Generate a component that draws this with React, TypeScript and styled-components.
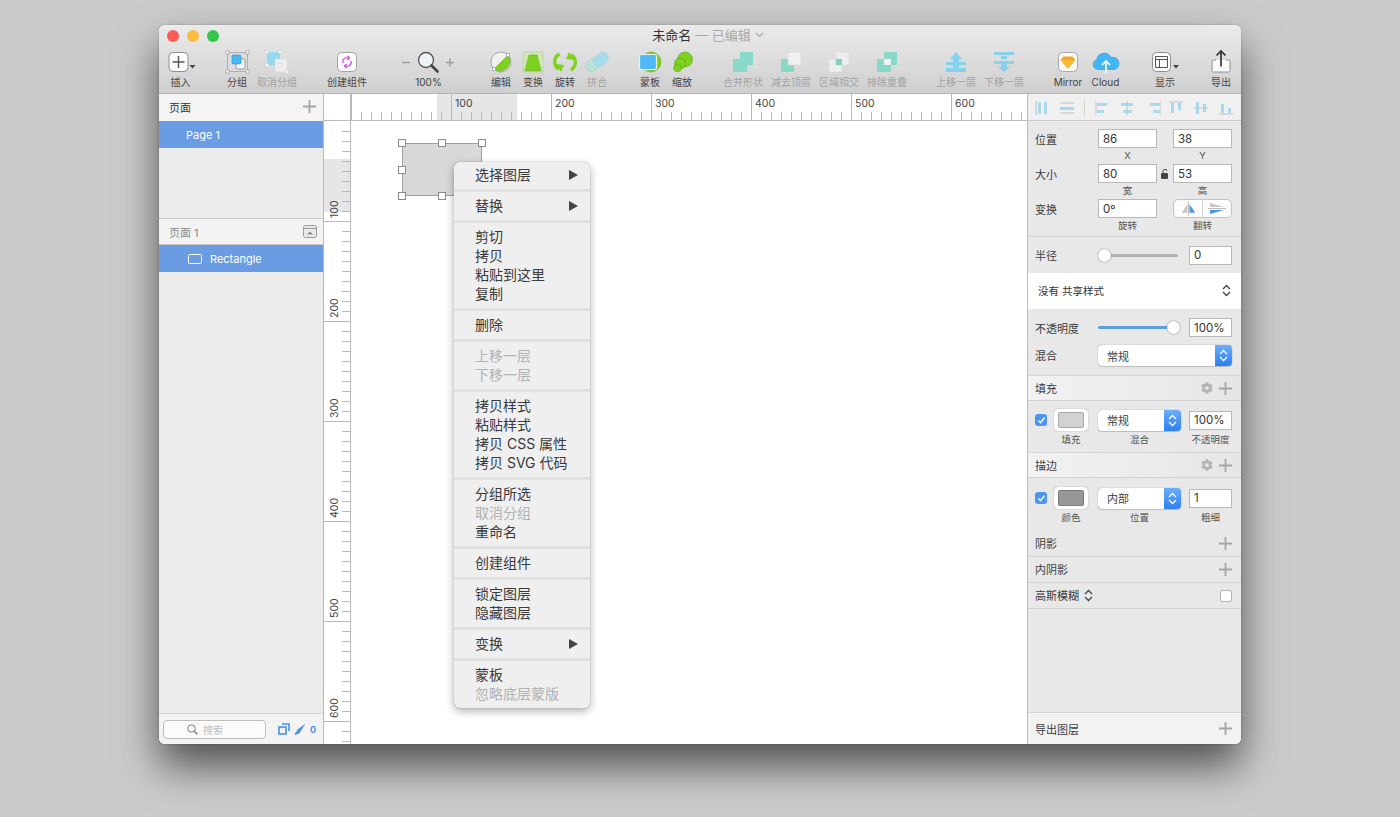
import * as React from "react";
import styled, { createGlobalStyle } from "styled-components";
import { FaCog } from "react-icons/fa";

const GlobalStyle = createGlobalStyle`
  html, body { margin: 0; padding: 0; height: 100%; background: #cbcbcb; }
  body { font-family: Inter, "Noto Sans CJK SC", sans-serif; overflow: hidden; }
  * { box-sizing: border-box; }
`;

const Desktop = styled.div`
  width: 1400px;
  height: 817px;
  padding: 25px 0 0 159px;
  background: #cbcbcb;
`;
const Window = styled.div`
  width: 1082px;
  height: 719px;
  display: flex;
  flex-direction: column;
  border-radius: 6px;
  overflow: hidden;
  background: #fff;
  box-shadow: 0 0 2px rgba(0, 0, 0, 0.3), 0 22px 42px rgba(0, 0, 0, 0.6);
`;
const TopBar = styled.div`
  height: 69px;
  flex: none;
  background: linear-gradient(#ebebeb, #d0cfd0);
  border-bottom: 1px solid #b4b4b4;
`;
const TitleRow = styled.div`
  height: 22px;
  display: grid;
  grid-template-columns: 1fr auto 1fr;
  align-items: center;
  padding: 0 8px;
`;
const Lights = styled.div`
  display: flex;
  gap: 8px;
`;
const Light = styled.span<{ $c: string }>`
  width: 12px;
  height: 12px;
  border-radius: 50%;
  background: ${(p) => p.$c};
`;
const Title = styled.div`
  font-size: 13px;
  line-height: 20px;
  margin: 0 0 2px 16px;
  color: #333;
  display: flex;
  align-items: center;
  gap: 4px;
  white-space: nowrap;
`;
const TitleSoft = styled.span`
  color: #a9a9a9;
`;
const Tools = styled.div`
  display: flex;
  gap: 21px;
  padding-left: 2px;
  margin-top: 2px;
`;
const ToolGroup = styled.div<{ $end?: boolean }>`
  display: flex;
  ${(p) => (p.$end ? "margin-left: -5px;" : "")}
`;
const Tool = styled.div<{ $w: number; $off?: boolean }>`
  width: ${(p) => p.$w}px;
  display: flex;
  flex-direction: column;
  align-items: center;
  font-size: 10px;
  line-height: 12px;
  white-space: nowrap;
  color: ${(p) => (p.$off ? "#a3a3a3" : "#444")};
  svg {
    display: block;
    height: 26px;
    margin-bottom: 1px;
  }
`;

const Body = styled.div`
  flex: 1;
  display: flex;
  min-height: 0;
`;
const LeftPanel = styled.div`
  width: 165px;
  flex: none;
  display: flex;
  flex-direction: column;
  background: #ececec;
  border-right: 1px solid #b9b9b9;
`;
const PagesHead = styled.div`
  height: 27px;
  flex: none;
  display: flex;
  align-items: center;
  justify-content: space-between;
  padding: 0 7px 2px 10px;
  font-size: 11px;
  color: #333;
  background: #f4f4f4;
`;
const PageRow = styled.div<{ $pad: number }>`
  height: 27px;
  flex: none;
  display: flex;
  align-items: center;
  gap: 8px;
  padding-left: ${(p) => p.$pad}px;
  background: #699ce3;
  color: #fff;
  font-size: 11px;
`;
const PagesGap = styled.div`
  height: 70px;
  flex: none;
`;
const LayersHead = styled.div`
  height: 27px;
  flex: none;
  display: flex;
  align-items: center;
  justify-content: space-between;
  padding: 0 6px 0 10px;
  font-size: 11px;
  color: #8a8a8a;
  background: #f3f3f3;
  border-top: 1px solid #c9c9c9;
  border-bottom: 1px solid #c4c4c4;
`;
const Grow = styled.div`
  flex: 1;
`;
const SearchBar = styled.div`
  height: 31px;
  flex: none;
  display: flex;
  align-items: center;
  padding: 0 0 0 4px;
  background: #f3f3f3;
  border-top: 1px solid #d5d5d5;
`;
const SearchBox = styled.div`
  width: 103px;
  height: 19px;
  display: flex;
  align-items: center;
  gap: 5px;
  padding-left: 23px;
  background: #fbfbfb;
  border: 1px solid #bdbdbd;
  border-radius: 4px;
  font-size: 10px;
  color: #bbb;
`;
const SearchTools = styled.div`
  display: flex;
  align-items: center;
  margin-left: 12px;
  gap: 4px;
  font-size: 9px;
  font-weight: 700;
  color: #4a90e2;
`;

const CanvasArea = styled.div`
  flex: 1;
  display: grid;
  grid-template-columns: 27px 1fr;
  grid-template-rows: 27px 1fr;
  min-width: 0;
  background: #fff;
`;
const Corner = styled.div`
  background: #fff;
  border-right: 1px solid #b9b9b9;
  border-bottom: 1px solid #b9b9b9;
`;
const RulerSvg = styled.svg`
  display: block;
  font-family: Inter, sans-serif;
  font-size: 10.5px;
  fill: #444;
`;
const Stage = styled.div`
  position: relative;
  overflow: hidden;
  background: #fff;
`;
const Shape = styled.div`
  position: absolute;
  left: 51px;
  top: 22px;
  width: 80px;
  height: 53px;
  background: #d8d7d9;
  box-shadow: inset 0 0 0 1px #9f9f9f;
`;
const Handle = styled.span<{ $x: string; $y: string }>`
  position: absolute;
  left: ${(p) => p.$x};
  top: ${(p) => p.$y};
  width: 8px;
  height: 8px;
  margin: -4px 0 0 -4px;
  background: #fff;
  border: 1px solid #8a8a8a;
`;
const Menu = styled.div`
  position: absolute;
  left: 103px;
  top: 41px;
  width: 136px;
  height: 546px;
  padding: 4px 0;
  background: #efefef;
  border-radius: 6px;
  box-shadow: 0 0 1px rgba(0, 0, 0, 0.35), 0 3px 9px rgba(0, 0, 0, 0.32);
`;
const MenuItem = styled.div<{ $off?: boolean }>`
  height: 19px;
  display: flex;
  align-items: center;
  justify-content: space-between;
  padding: 0 12px 4px 21px;
  font-size: 14px;
  white-space: nowrap;
  color: ${(p) => (p.$off ? "#b2b2b2" : "#3a3a3a")};
`;
const MenuArrow = styled.span`
  width: 0;
  height: 0;
  margin-top: 2px;
  border-left: 9px solid #444;
  border-top: 5px solid transparent;
  border-bottom: 5px solid transparent;
`;
const MenuSep = styled.div`
  height: 3px;
  margin: 4px 0 5px;
  background: #e1e1e1;
`;

const RightPanel = styled.div`
  width: 214px;
  flex: none;
  display: flex;
  flex-direction: column;
  background: #e8e8e8;
  border-left: 1px solid #bdbdbd;
  color: #3c3c3c;
  font-size: 11px;
`;
const AlignBar = styled.div`
  height: 27px;
  flex: none;
  display: flex;
  align-items: center;
  padding: 1px 0 0 7px;
  background: #f0f0f0;
  border-bottom: 1px solid #c9c9c9;
`;
const AlignIcon = styled.span<{ $w: number }>`
  width: ${(p) => p.$w}px;
  display: flex;
  justify-content: flex-start;
`;
const AlignSep = styled.span`
  width: 1px;
  height: 16px;
  margin-right: 10px;
  background: #d0d0d0;
`;
const Geometry = styled.div`
  height: 116px;
  flex: none;
  padding: 8px 9px 0 7px;
  border-bottom: 1px solid #d2d2d2;
  display: grid;
  grid-template-columns: 63px 59px 16px 59px;
  grid-auto-rows: 35px;
`;
const FieldCell = styled.div`
  display: flex;
  flex-direction: column;
  align-items: center;
`;
const RowLabel = styled.div`
  height: 19px;
  display: flex;
  align-items: center;
  white-space: nowrap;
`;
const Input = styled.div<{ $w?: number; $h?: number }>`
  width: ${(p) => (p.$w ? `${p.$w}px` : "100%")};
  height: ${(p) => p.$h ?? 19}px;
  flex: none;
  display: flex;
  align-items: center;
  padding-left: 4px;
  background: #fff;
  border: 1px solid #b8b8b8;
  font-size: 11.5px;
  color: #333;
`;
const Sub = styled.div`
  font-size: 9.5px;
  line-height: 16px;
  color: #555;
  white-space: nowrap;
`;
const LockCell = styled.div`
  height: 19px;
  display: flex;
  align-items: center;
  justify-content: center;
`;
const Flip = styled.div`
  width: 100%;
  height: 19px;
  display: flex;
  background: #fcfcfc;
  border: 1px solid #c4c4c4;
  border-radius: 5px;
  svg:first-child {
    border-right: 1px solid #d5d5d5;
  }
`;
const SliderRow = styled.div<{ $h: number }>`
  height: ${(p) => p.$h}px;
  flex: none;
  display: grid;
  grid-template-columns: 63px 82px 1fr;
  align-items: center;
  padding: 0 9px 0 7px;
`;
const Track = styled.div<{ $fill: number }>`
  position: relative;
  height: 3px;
  width: 80px;
  border-radius: 2px;
  background: ${(p) => (p.$fill ? "#5a9fe6" : "#b3b3b3")};
`;
const Thumb = styled.span<{ $fill: number }>`
  position: absolute;
  top: -5px;
  left: ${(p) => (p.$fill ? "69px" : "0")};
  width: 13px;
  height: 13px;
  border-radius: 50%;
  background: #fff;
  box-shadow: 0 0 1.5px rgba(0, 0, 0, 0.6);
`;
const SliderInput = styled(Input)`
  margin-left: 9px;
  width: 43px;
`;
const SharedStyle = styled.div`
  height: 36px;
  flex: none;
  display: flex;
  align-items: center;
  justify-content: space-between;
  padding: 0 10px 1px;
  background: #fff;
  font-size: 10.5px;
  color: #333;
`;
const BlendRow = styled.div`
  height: 30px;
  margin-top: -1px;
  flex: none;
  display: grid;
  grid-template-columns: 63px 1fr;
  align-items: start;
  padding: 0 9px 0 7px;
`;
const SelectBox = styled.div<{ $w?: number }>`
  width: ${(p) => (p.$w ? `${p.$w}px` : "100%")};
  height: 21px;
  display: flex;
  align-items: center;
  justify-content: space-between;
  padding-left: 9px;
  background: #fff;
  border-radius: 4px;
  box-shadow: 0 0 1px rgba(0, 0, 0, 0.55), 0 1px 1px rgba(0, 0, 0, 0.15);
  overflow: hidden;
  font-size: 11px;
`;
const Stepper = styled.span`
  width: 17px;
  height: 21px;
  display: flex;
  align-items: center;
  justify-content: center;
  background: linear-gradient(#69aef9, #2f7ff0);
`;
const SectionHead = styled.div<{ $plain?: boolean }>`
  height: 26px;
  flex: none;
  display: flex;
  align-items: center;
  gap: 6px;
  padding: 0 9px 0 7px;
  border-top: ${(p) => (p.$plain ? "none" : "1px solid #d6d6d6")};
  border-bottom: 1px solid #d2d2d2;
  background: ${(p) => (p.$plain ? "#e8e8e8" : "linear-gradient(90deg, #f2f2f2, #e6e6e6)")};
`;
const HeadName = styled.span`
  flex: 1;
  display: flex;
  align-items: center;
  gap: 5px;
  padding-bottom: 1px;
`;
const StyleRow = styled.div<{ $h: number; $pad: number }>`
  height: ${(p) => p.$h}px;
  flex: none;
  display: grid;
  grid-template-columns: 19px 44px 83px 8px 43px;
  padding: ${(p) => p.$pad}px 0 0 7px;
  align-items: start;
`;
const StyleCell = styled.div<{ $w?: number }>`
  width: ${(p) => (p.$w ? `${p.$w}px` : "auto")};
  display: flex;
  flex-direction: column;
  align-items: center;
`;
const Slot = styled.div`
  width: 100%;
  height: 22px;
  display: flex;
  align-items: center;
  margin-bottom: 1px;
`;
const Check = styled.span`
  width: 12px;
  height: 12px;
  margin-top: 5px;
  display: flex;
  align-items: center;
  justify-content: center;
  border-radius: 3px;
  background: #4a96f2;
`;
const SwatchFrame = styled.span`
  width: 34px;
  height: 22px;
  display: flex;
  padding: 3px 4px;
  background: #fff;
  border-radius: 4px;
  box-shadow: 0 0 1px rgba(0, 0, 0, 0.6);
`;
const SwatchFill = styled.span<{ $c: string }>`
  flex: 1;
  border-radius: 2px;
  border: 1px solid rgba(0, 0, 0, 0.2);
  background: ${(p) => p.$c};
`;
const BlurCheck = styled.span`
  width: 12px;
  height: 12px;
  background: #fff;
  border: 1px solid #b5b5b5;
  border-radius: 2px;
`;
const ExportBar = styled.div`
  height: 32px;
  flex: none;
  display: flex;
  align-items: center;
  justify-content: space-between;
  padding: 0 9px 0 7px;
  background: #f2f2f2;
  border-top: 1px solid #d6d6d6;
`;

const Plus = ({ s = 13 }: { s?: number }) => (
  <svg width={s} height={s} viewBox="0 0 13 13">
    <path d="M6.5 0v13M0 6.5h13" stroke="#a6a6a6" strokeWidth="1.8" />
  </svg>
);
const UpDown = ({ c = "#444" }: { c?: string }) => (
  <svg width="9" height="13" viewBox="0 0 9 13" fill="none" stroke={c} strokeWidth="1.3">
    <path d="M1 5l3.5-3.5L8 5M1 8l3.5 3.5L8 8" />
  </svg>
);

const Hnd = ({ x, y, pale }: { x: number; y: number; pale?: boolean }) => (
  <rect x={x - 1.5} y={y - 1.5} width="3" height="3" fill="#fff" stroke={pale ? "#c9c9c9" : "#8f8f8f"} strokeWidth=".6" />
);
const TOOL_ICONS: Record<string, React.ReactNode> = {
  insert: (
    <svg width="32" viewBox="0 0 32 26">
      <rect x="4" y="3.5" width="19" height="19" rx="4" fill="#fbfbfb" stroke="#8e8e8e" />
      <path d="M13.5 7v12M7.5 13h12" stroke="#555" strokeWidth="1.4" />
      <path d="M24.5 16h6l-3 3.5z" fill="#444" />
    </svg>
  ),
  group: (
    <svg width="32" viewBox="0 0 32 26">
      <rect x="6.5" y="3.5" width="20" height="19" fill="#dcdcdc" stroke="#9a9a9a" strokeWidth=".7" />
      <rect x="15" y="10" width="9" height="10" rx="1.5" fill="#f4f4f4" stroke="#777" strokeWidth=".7" />
      <rect x="11" y="6" width="9" height="9" rx="1.5" fill="#45b8f5" stroke="#2e8bc8" strokeWidth=".6" />
      <Hnd x={6.5} y={3.5} /><Hnd x={26.5} y={3.5} /><Hnd x={6.5} y={22.5} /><Hnd x={26.5} y={22.5} />
    </svg>
  ),
  ungroup: (
    <svg width="32" viewBox="0 0 32 26">
      <rect x="6" y="3" width="13" height="13" fill="#93d9ef" />
      <rect x="14" y="10" width="12" height="13" fill="#ededed" stroke="#d8d8d8" strokeWidth=".6" />
      <Hnd x={6} y={3} pale /><Hnd x={19} y={3} pale /><Hnd x={6} y={16} pale /><Hnd x={19} y={16} pale /><Hnd x={26} y={23} pale />
    </svg>
  ),
  component: (
    <svg width="32" viewBox="0 0 32 26">
      <rect x="6.5" y="3.5" width="19" height="19" rx="4" fill="#fbfbfb" stroke="#a3a3a3" />
      <g fill="none" stroke="#cf3fe0" strokeWidth="1.2">
        <path d="M12 14c-1-4 2-6 6-5M20 12c1 4-2 6-6 5" />
        <path d="M16.5 7l2 2-2 2M15.5 15l-2 2 2 2" />
      </g>
    </svg>
  ),
  zoom: (
    <svg width="71" viewBox="0 0 71 26">
      <path d="M9 13.5h8M53 13.5h8M57 9.5v8" stroke="#a0a0a0" strokeWidth="1.6" />
      <circle cx="33" cy="11" r="7.5" fill="#eef3f5" stroke="#555" strokeWidth="1.3" />
      <path d="M38.5 16.5L44.5 22.5" stroke="#444" strokeWidth="2.6" strokeLinecap="round" />
    </svg>
  ),
  edit: (
    <svg width="32" viewBox="0 0 32 26">
      <circle cx="16" cy="13" r="10" fill="#f2f2f2" stroke="#999" strokeWidth=".8" />
      <path d="M23 6a10 10 0 0 1-14 14z" fill="#7fd11f" stroke="#5fa80e" strokeWidth=".5" />
      <Hnd x={23} y={6} /><Hnd x={9} y={20} />
    </svg>
  ),
  transform: (
    <svg width="32" viewBox="0 0 32 26">
      <rect x="6" y="3" width="20" height="20" fill="#cfe7b4" stroke="#b5c9a0" strokeWidth=".6" />
      <path d="M12 6h8l4 16H8z" fill="#7fd11f" stroke="#62a812" strokeWidth=".5" />
    </svg>
  ),
  rotate: (
    <svg width="32" viewBox="0 0 32 26">
      <g fill="none" stroke="#7fd11f" strokeWidth="3.4">
        <path d="M10.5 5C4.5 8 4 17 10 20" />
        <path d="M22 21c5.5-3.5 6-12 0-15" />
      </g>
      <path d="M7 15l8 1-3 7z" fill="#7fd11f" />
      <path d="M25 11l-8-1 3-7z" fill="#7fd11f" />
    </svg>
  ),
  flatten: (
    <svg width="32" viewBox="0 0 32 26">
      <rect x="4" y="10" width="16" height="11" rx="5.5" transform="rotate(-40 12 15.5)" fill="#b7e4d6" stroke="#a0cdd6" strokeWidth=".5" />
      <rect x="12" y="5" width="16" height="11" rx="5.5" transform="rotate(-40 20 10.5)" fill="#a9dcec" stroke="#a0cdd6" strokeWidth=".5" />
    </svg>
  ),
  mask: (
    <svg width="32" viewBox="0 0 32 26">
      <circle cx="17" cy="13" r="10" fill="#7fd11f" stroke="#5fa80e" strokeWidth=".5" />
      <rect x="5.5" y="5.5" width="17" height="15" rx="2" fill="#50b9f5" stroke="#e9f3f7" strokeWidth="1.2" />
    </svg>
  ),
  scale: (
    <svg width="32" viewBox="0 0 32 26">
      <g fill="#7fd11f" stroke="#5c9f10" strokeWidth=".6">
        <circle cx="19" cy="10.5" r="7.5" />
        <circle cx="14" cy="14.5" r="5.5" />
        <circle cx="11.5" cy="19" r="3.8" />
      </g>
    </svg>
  ),
  union: (
    <svg width="48" viewBox="0 0 48 26">
      <path d="M21 3h13v13h-6v7H14V10h7z" fill="#88d9ca" />
    </svg>
  ),
  subtract: (
    <svg width="48" viewBox="0 0 48 26">
      <rect x="14" y="10" width="13" height="13" fill="#88d9ca" />
      <rect x="21" y="3" width="13" height="13" fill="#f1f1f1" stroke="#d8d8d8" strokeWidth=".6" />
    </svg>
  ),
  intersect: (
    <svg width="48" viewBox="0 0 48 26">
      <rect x="14" y="10" width="13" height="13" fill="#eeeeee" stroke="#d8d8d8" strokeWidth=".6" />
      <rect x="21" y="3" width="13" height="13" fill="#eeeeee" stroke="#d8d8d8" strokeWidth=".6" />
      <rect x="21" y="10" width="6" height="6" fill="#7ed3c3" />
    </svg>
  ),
  difference: (
    <svg width="48" viewBox="0 0 48 26">
      <rect x="14" y="10" width="14" height="13" fill="#88d9ca" />
      <rect x="21" y="3" width="13" height="13" fill="#88d9ca" />
      <rect x="21" y="10" width="7" height="6" fill="#f1f1f1" />
    </svg>
  ),
  forward: (
    <svg width="48" viewBox="0 0 48 26">
      <path d="M24 3l6 7h-3v3h7v3h-7v3h7v4H14v-4h7v-3h-7v-3h7v-3h-3z" fill="#86d2ee" />
    </svg>
  ),
  backward: (
    <svg width="48" viewBox="0 0 48 26">
      <path d="M14 3h20v3H14zM14 12h20v3h-7v3h3l-6 5-6-5h3v-3h-7zM21 7h6v3h-6z" fill="#86d2ee" />
    </svg>
  ),
  mirror: (
    <svg width="38" viewBox="0 0 38 26">
      <rect x="9.5" y="3.5" width="19" height="19" rx="4" fill="#fbfbfb" stroke="#a8a8a8" />
      <path d="M14.5 7.5h9l3 3.5-7.5 8.500L11.5 11z" fill="#f5a623" />
      <path d="M11.5 11h15l-7.5 8.500z" fill="#fdb93a" />
    </svg>
  ),
  cloud: (
    <svg width="38" viewBox="0 0 38 26">
      <path d="M11 20.5a5 5 0 0 1-1.2-9.8A7.5 7.5 0 0 1 24 8.500a6 6 0 0 1 3.500 12z" fill="#41b6f6" stroke="#2a8fd0" strokeWidth=".6" />
      <path d="M19 24V12M15 16l4-4 4 4" fill="none" stroke="#fff" strokeWidth="1.7" />
    </svg>
  ),
  display: (
    <svg width="40" viewBox="0 0 40 26">
      <rect x="7.5" y="3.5" width="18" height="19" rx="4" fill="#fbfbfb" stroke="#8e8e8e" />
      <path d="M10.5 7.5h12v11h-12zM10.5 10.5h12M14.5 10.5v8" fill="none" stroke="#555" />
      <path d="M28 16h6l-3 3.5z" fill="#444" />
    </svg>
  ),
  share: (
    <svg width="40" viewBox="0 0 40 26">
      <path d="M15 11h-2.5a1.500 1.500 0 0 0-1.500 1.500v9a1.500 1.500 0 0 0 1.500 1.500h15a1.500 1.500 0 0 0 1.500-1.500v-9a1.500 1.500 0 0 0-1.500-1.500H25" fill="#fbfbfb" stroke="#8e8e8e" />
      <path d="M20 17.500V2M15.500 6.500L20 2l4.500 4.500" fill="none" stroke="#333" strokeWidth="1.7" />
    </svg>
  ),
};

type ToolDef = { id: string; label: string; w: number; off?: boolean };
const TOOL_GROUPS: ToolDef[][] = [
  [{ id: "insert", label: "插入", w: 39 }],
  [
    { id: "group", label: "分组", w: 32 },
    { id: "ungroup", label: "取消分组", w: 48, off: true },
  ],
  [{ id: "component", label: "创建组件", w: 50 }],
  [{ id: "zoom", label: "100%", w: 71 }],
  [
    { id: "edit", label: "编辑", w: 32 },
    { id: "transform", label: "变换", w: 32 },
    { id: "rotate", label: "旋转", w: 32 },
    { id: "flatten", label: "拼合", w: 32, off: true },
  ],
  [
    { id: "mask", label: "蒙板", w: 32 },
    { id: "scale", label: "缩放", w: 32 },
  ],
  [
    { id: "union", label: "合并形状", w: 48, off: true },
    { id: "subtract", label: "减去顶层", w: 48, off: true },
    { id: "intersect", label: "区域相交", w: 48, off: true },
    { id: "difference", label: "排除重叠", w: 48, off: true },
  ],
  [
    { id: "forward", label: "上移一层", w: 48, off: true },
    { id: "backward", label: "下移一层", w: 48, off: true },
  ],
  [
    { id: "mirror", label: "Mirror", w: 38 },
    { id: "cloud", label: "Cloud", w: 37 },
  ],
  [{ id: "display", label: "显示", w: 40 }],
];

const ALIGN_ICONS: { w: number; d: string; line?: string }[] = [
  { w: 25, d: "M3 1h3v12H3zM9 1h3v12H9z", line: "M1 0v14" },
  { w: 24, d: "M0 6h15v3H0z", line: "M0 2h15M0 12h15" },
  { w: 25, d: "M2 2h10v3H2zM2 9h7v3H2z", line: "M1 0v14" },
  { w: 27, d: "M1 2h12v3H1zM3 9h9v3H3z", line: "M7 0v14" },
  { w: 22, d: "M3 2h10v3H3zM6 9h7v3H6z", line: "M14 0v14" },
  { w: 25, d: "M2 2h3v10H2zM9 2h3v7H9z", line: "M0 1h14" },
  { w: 25, d: "M2 1h3v12H2zM9 3h3v8H9z", line: "M0 7h14" },
  { w: 14, d: "M2 3h3v9H2zM9 7h3v5H9z", line: "M0 13h14" },
];

const AlignGlyph = ({ d, line }: { d: string; line?: string }) => (
  <svg width="14" height="14" viewBox="0 0 14 14">
    <path d={d} fill="#a7d9f3" />
    {line && <path d={line} stroke="#c2c2c2" />}
  </svg>
);

const MENU: (string | { t: string; off?: boolean; arrow?: boolean })[] = [
  { t: "选择图层", arrow: true }, "-",
  { t: "替换", arrow: true }, "-",
  { t: "剪切" }, { t: "拷贝" }, { t: "粘贴到这里" }, { t: "复制" }, "-",
  { t: "删除" }, "-",
  { t: "上移一层", off: true }, { t: "下移一层", off: true }, "-",
  { t: "拷贝样式" }, { t: "粘贴样式" }, { t: "拷贝 CSS 属性" }, { t: "拷贝 SVG 代码" }, "-",
  { t: "分组所选" }, { t: "取消分组", off: true }, { t: "重命名" }, "-",
  { t: "创建组件" }, "-",
  { t: "锁定图层" }, { t: "隐藏图层" }, "-",
  { t: "变换", arrow: true }, "-",
  { t: "蒙板" }, { t: "忽略底层蒙版", off: true },
];

const HRuler = () => {
  const ticks = [];
  for (let i = 0; i <= 67; i++) {
    const major = i % 10 === 0;
    ticks.push(<path key={i} d={`M${i * 10 + 27.5} ${major ? 0 : 18}V26`} stroke="#b9b9b9" />);
  }
  return (
    <RulerSvg width="676" height="27" viewBox="27 0 676 27">
      <rect x="113" y="0" width="80" height="26" fill="#e6e6e6" />
      <path d="M27 26.500H703" stroke="#b9b9b9" />
      {ticks}
      {[100, 200, 300, 400, 500, 600].map((n) => (
        <text key={n} x={n + 31} y="13">{n}</text>
      ))}
    </RulerSvg>
  );
};
const VRuler = () => {
  const ticks = [];
  for (let i = 1; i <= 62; i++) {
    const major = i % 10 === 0;
    ticks.push(<path key={i} d={`M${major ? 0 : 18} ${i * 10 + 0.5}H26`} stroke="#b9b9b9" />);
  }
  return (
    <RulerSvg width="27" height="623" viewBox="0 0 27 623">
      <rect x="0" y="38" width="26" height="53" fill="#e6e6e6" />
      <path d="M26.500 0V623" stroke="#b9b9b9" />
      {ticks}
      {[100, 200, 300, 400, 500, 600].map((n) => (
        <text key={n} transform={`translate(14 ${n - 3}) rotate(-90)`}>{n}</text>
      ))}
    </RulerSvg>
  );
};

const Select = ({ label, w }: { label: string; w?: number }) => (
  <SelectBox $w={w}>
    {label}
    <Stepper>
      <UpDown c="#fff" />
    </Stepper>
  </SelectBox>
);

const StyleBlock = ({ h, pad, color, mode, modeLabel, swatchLabel, value, valueLabel }: {
  h: number; pad: number; color: string; mode: string; modeLabel: string; swatchLabel: string; value: string; valueLabel: string;
}) => (
  <StyleRow $h={h} $pad={pad}>
    <Check>
      <svg width="9" height="9" viewBox="0 0 9 9">
        <path d="M1.500 4.500l2 2.200 4-5" fill="none" stroke="#fff" strokeWidth="1.500" />
      </svg>
    </Check>
    <StyleCell $w={34}>
      <Slot><SwatchFrame><SwatchFill $c={color} /></SwatchFrame></Slot>
      <Sub>{swatchLabel}</Sub>
    </StyleCell>
    <StyleCell>
      <Slot><Select label={mode} w={83} /></Slot>
      <Sub>{modeLabel}</Sub>
    </StyleCell>
    <span />
    <StyleCell>
      <Slot><Input $w={43}>{value}</Input></Slot>
      <Sub>{valueLabel}</Sub>
    </StyleCell>
  </StyleRow>
);

const App = () => (
  <Desktop>
    <GlobalStyle />
    <Window>
      <TopBar>
        <TitleRow>
          <Lights>
            <Light $c="#fc5b57" />
            <Light $c="#fdbc40" />
            <Light $c="#34c84a" />
          </Lights>
          <Title>
            未命名 <TitleSoft>— 已编辑</TitleSoft>
            <svg width="9" height="6" viewBox="0 0 9 6" fill="none" stroke="#a9a9a9" strokeWidth="1.200">
              <path d="M1 1l3.500 3.500L8 1" />
            </svg>
          </Title>
        </TitleRow>
        <Tools>
          {TOOL_GROUPS.map((g, i) => (
            <ToolGroup key={i}>
              {g.map((t) => (
                <Tool key={t.id} $w={t.w} $off={t.off}>
                  {TOOL_ICONS[t.id]}
                  {t.label}
                </Tool>
              ))}
            </ToolGroup>
          ))}
          <ToolGroup $end>
            <Tool $w={40}>
              {TOOL_ICONS.share}
              导出
            </Tool>
          </ToolGroup>
        </Tools>
      </TopBar>
      <Body>
        <LeftPanel>
          <PagesHead>
            页面
            <Plus />
          </PagesHead>
          <PageRow $pad={27}>Page 1</PageRow>
          <PagesGap />
          <LayersHead>
            页面 1
            <svg width="14" height="13" viewBox="0 0 14 13">
              <rect x=".5" y=".5" width="13" height="12" rx="2" fill="#e9e9e9" stroke="#9a9a9a" />
              <path d="M.5 3.500h13" stroke="#9a9a9a" />
              <path d="M4 9.500l3-3 3 3z" fill="#8a8a8a" />
            </svg>
          </LayersHead>
          <PageRow $pad={29}>
            <svg width="14" height="10" viewBox="0 0 14 10">
              <rect x=".5" y=".5" width="13" height="9" rx="1" fill="none" stroke="#fff" />
            </svg>
            Rectangle
          </PageRow>
          <Grow />
          <SearchBar>
            <SearchBox>
              <svg width="11" height="11" viewBox="0 0 11 11" fill="none" stroke="#777">
                <circle cx="4.500" cy="4.500" r="3.700" />
                <path d="M7.300 7.300l3 3" strokeWidth="1.400" />
              </svg>
              搜索
            </SearchBox>
            <SearchTools>
              <svg width="12" height="12" viewBox="0 0 12 12" fill="none" stroke="#4a90e2" strokeWidth="1.600">
                <rect x="1" y="4" width="7" height="7" />
                <path d="M4 1h7v7" />
              </svg>
              <svg width="12" height="12" viewBox="0 0 12 12" fill="#4a90e2">
                <path d="M11.500.500L5 5.500c-1.500.5-2 2-2.500 3L0 11.500c3 0 5.500-.5 6.500-3z" />
              </svg>
              <span>0</span>
            </SearchTools>
          </SearchBar>
        </LeftPanel>
        <CanvasArea>
          <Corner />
          <HRuler />
          <VRuler />
          <Stage>
            <Shape>
              <Handle $x="0" $y="0" />
              <Handle $x="50%" $y="0" />
              <Handle $x="100%" $y="0" />
              <Handle $x="0" $y="50%" />
              <Handle $x="0" $y="100%" />
              <Handle $x="50%" $y="100%" />
            </Shape>
            <Menu>
              {MENU.map((m, i) =>
                typeof m === "string" ? (
                  <MenuSep key={i} />
                ) : (
                  <MenuItem key={i} $off={m.off}>
                    {m.t}
                    {m.arrow && <MenuArrow />}
                  </MenuItem>
                )
              )}
            </Menu>
          </Stage>
        </CanvasArea>
        <RightPanel>
          <AlignBar>
            {ALIGN_ICONS.slice(0, 2).map((a, i) => (
              <AlignIcon key={i} $w={a.w}><AlignGlyph d={a.d} line={a.line} /></AlignIcon>
            ))}
            <AlignSep />
            {ALIGN_ICONS.slice(2).map((a, i) => (
              <AlignIcon key={i} $w={a.w}><AlignGlyph d={a.d} line={a.line} /></AlignIcon>
            ))}
          </AlignBar>
          <Geometry>
            <RowLabel>位置</RowLabel>
            <FieldCell><Input>86</Input><Sub>X</Sub></FieldCell>
            <span />
            <FieldCell><Input>38</Input><Sub>Y</Sub></FieldCell>
            <RowLabel>大小</RowLabel>
            <FieldCell><Input>80</Input><Sub>宽</Sub></FieldCell>
            <LockCell>
              <svg width="8" height="10" viewBox="0 0 8 10">
                <rect x="0" y="4" width="7" height="6" rx="1" fill="#444" />
                <path d="M2 4V2.500a2 2 0 0 1 4-.5" fill="none" stroke="#444" />
              </svg>
            </LockCell>
            <FieldCell><Input>53</Input><Sub>高</Sub></FieldCell>
            <RowLabel>变换</RowLabel>
            <FieldCell><Input>0º</Input><Sub>旋转</Sub></FieldCell>
            <span />
            <FieldCell>
              <Flip>
                <svg width="29" height="17" viewBox="0 0 29 17">
                  <path d="M14 4L8 13h6z" fill="#c6c6c6" />
                  <path d="M16 4l6 9h-6z" fill="#4a96e8" />
                  <path d="M15 1v15" stroke="#bbb" />
                </svg>
                <svg width="28" height="17" viewBox="0 0 28 17">
                  <path d="M7 3l14 4H7z" fill="#c6c6c6" />
                  <path d="M7 14l14-4H7z" fill="#4a96e8" />
                  <path d="M5 8.500h18" stroke="#bbb" />
                </svg>
              </Flip>
              <Sub>翻转</Sub>
            </FieldCell>
          </Geometry>
          <SliderRow $h={36}>
            半径
            <Track $fill={0}><Thumb $fill={0} /></Track>
            <SliderInput>0</SliderInput>
          </SliderRow>
          <SharedStyle>
            没有 共享样式
            <UpDown />
          </SharedStyle>
          <SliderRow $h={37}>
            不透明度
            <Track $fill={1}><Thumb $fill={1} /></Track>
            <SliderInput>100%</SliderInput>
          </SliderRow>
          <BlendRow>
            <RowLabel>混合</RowLabel>
            <Select label="常规" />
          </BlendRow>
          <SectionHead>
            <HeadName>填充</HeadName>
            <FaCog size={12} color="#b4b4b4" />
            <Plus />
          </SectionHead>
          <StyleBlock h={51} pad={8} color="#d2d2d2" mode="常规" modeLabel="混合" swatchLabel="填充" value="100%" valueLabel="不透明度" />
          <SectionHead>
            <HeadName>描边</HeadName>
            <FaCog size={12} color="#b4b4b4" />
            <Plus />
          </SectionHead>
          <StyleBlock h={53} pad={9} color="#979797" mode="内部" modeLabel="位置" swatchLabel="颜色" value="1" valueLabel="粗细" />
          <SectionHead $plain><HeadName>阴影</HeadName><Plus /></SectionHead>
          <SectionHead $plain><HeadName>内阴影</HeadName><Plus /></SectionHead>
          <SectionHead $plain>
            <HeadName>高斯模糊 <UpDown /></HeadName>
            <BlurCheck />
          </SectionHead>
          <Grow />
          <ExportBar>
            导出图层
            <Plus />
          </ExportBar>
        </RightPanel>
      </Body>
    </Window>
  </Desktop>
);

export default App;
